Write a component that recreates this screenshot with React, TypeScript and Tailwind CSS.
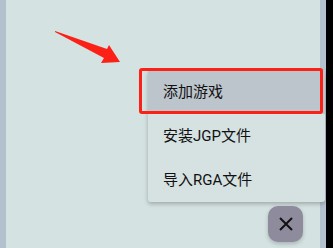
import React from "react";

const items = ["添加游戏", "安装JGP文件", "导入RGA文件"];

export default function App() {
  return (
    <div
      className="relative flex w-[333px] h-[248px] overflow-hidden bg-black"
      style={{ fontFamily: 'Roboto, "Noto Sans CJK SC", sans-serif' }}
    >
      {/* left edge of the drawer */}
      <div className="w-[6px] h-full bg-[#b3c0cd]" />
      {/* main content area */}
      <div className="flex-1 h-full bg-[#d4e2e1]" />
      {/* right edge */}
      <div className="w-[6px] h-full bg-[#b4c2cf]" />
      <div className="w-[7px] h-full bg-black" />

      {/* pointing arrow */}
      <svg
        className="absolute left-0 top-0 pointer-events-none"
        width="333"
        height="248"
        viewBox="0 0 333 248"
      >
        <polygon points="55,31 107,49 109,45 120,62 101,63 104,58 55,32" fill="#fb2116" />
      </svg>

      {/* dropdown menu */}
      <div className="absolute left-[148px] top-[70px] w-[177px] flex flex-col rounded-[3px] bg-[#d6e2e1] shadow-[0_2px_4px_rgba(0,0,0,0.25)]">
        {items.map((label, i) => (
          <div
            key={label}
            className={`h-[44px] flex items-center pl-[15px] text-[15px] text-[#111] ${
              i === 0 ? "bg-[#bcc4cc]" : ""
            }`}
          >
            {label}
          </div>
        ))}
      </div>

      {/* highlight box */}
      <div className="absolute left-[139px] top-[68px] w-[184px] h-[46px] border-[3px] border-[#fb2116] rounded-[3px] pointer-events-none" />

      {/* close fab */}
      <button className="absolute left-[268px] top-[206px] w-[35px] h-[36px] rounded-[10px] bg-[#8e8c9c] flex items-center justify-center shadow-[0_2px_4px_rgba(0,0,0,0.2)]">
        <svg width="14" height="14" viewBox="0 0 14 14">
          <path d="M1 1L13 13M13 1L1 13" stroke="#111" strokeWidth="2" />
        </svg>
      </button>
    </div>
  );
}
